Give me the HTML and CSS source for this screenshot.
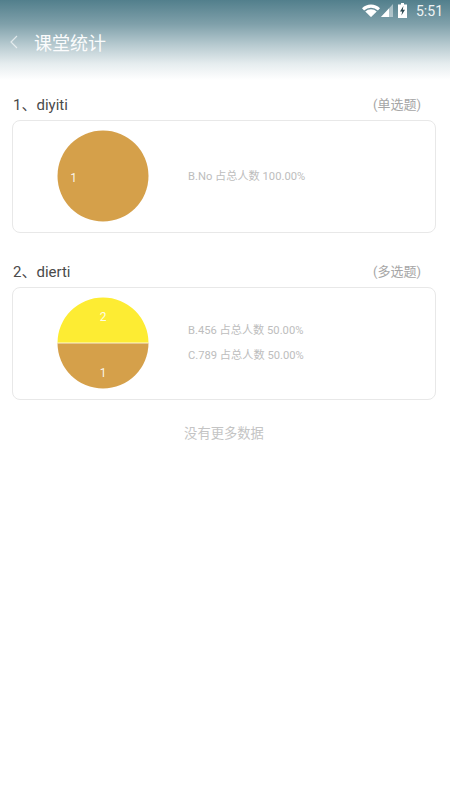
FILE: index.html
```html
<!DOCTYPE html>
<html lang="zh">
<head>
	<meta charset="UTF-8" />
	<meta name="viewport" content="width=device-width, initial-scale=1.0" />
	<title>课堂统计</title>
	<link rel="stylesheet" href="styles.css">
</head>
<body>
	<header class="header">
		<div class="status">
			<svg class="wifi" width="18" height="13" viewBox="0 0 19 13">
				<path d="M0 4 A14 14 0 0 1 19 4 L16.8 6.4 A11 11 0 0 0 2.2 6.4 Z" fill="#fff" />
				<path d="M3.4 7.6 A9 9 0 0 1 15.6 7.6 L9.5 13.5 Z" fill="#fff" />
			</svg>
			<svg class="signal" width="12" height="13" viewBox="0 0 12 13">
				<path d="M12 0 V13 H0 Z" fill="#fff" fill-opacity="0.45" />
				<path d="M8 4.5 V13 H0 Z" fill="#fff" />
			</svg>
			<svg class="battery" width="9" height="15" viewBox="0 0 9 15">
				<path d="M3 0 H6 V1.5 H9 V15 H0 V1.5 H3 Z" fill="#fff" />
				<path d="M5.4 3 L2 8.6 H4.2 L3.4 12.6 L7 6.8 H4.8 Z" fill="#2f4a52" />
			</svg>
			<span class="time">5:51</span>
		</div>
		<div class="title-bar">
			<svg class="back" width="9" height="14" viewBox="0 0 9 14">
				<path d="M8 1 L2 7 L8 13" fill="none" stroke="#fff" stroke-opacity="0.65" stroke-width="1.2" />
			</svg>
			<h1 class="title">课堂统计</h1>
		</div>
	</header>

	<main class="list">
		<section class="question">
			<div class="question-head">
				<span class="question-name">1、diyiti</span>
				<span class="question-type">(单选题)</span>
			</div>
			<div class="card">
				<div class="pie">
					<svg width="92" height="92" viewBox="0 0 92 92">
						<circle cx="46" cy="46" r="45.5" fill="#d5a04a" />
						<text class="pie-label" x="16.500" y="52">1</text>
					</svg>
				</div>
				<div class="stats">
					<p class="stat">B.No 占总人数 100.00%</p>
				</div>
			</div>
		</section>

		<section class="question">
			<div class="question-head">
				<span class="question-name">2、dierti</span>
				<span class="question-type">(多选题)</span>
			</div>
			<div class="card">
				<div class="pie">
					<svg width="92" height="92" viewBox="0 0 92 92">
						<path d="M0.500 46 A45.500 45.500 0 0 1 91.500 46 Z" fill="#fdec33" />
						<path d="M0.500 46 A45.500 45.500 0 0 0 91.500 46 Z" fill="#d5a04a" />
						<line x1="0.500" y1="46" x2="91.500" y2="46" stroke="#fff" stroke-opacity="0.8" stroke-width="1" />
						<text class="pie-label" x="46" y="24">2</text>
						<text class="pie-label" x="46" y="80">1</text>
					</svg>
				</div>
				<div class="stats">
					<p class="stat">B.456 占总人数 50.00%</p>
					<p class="stat">C.789 占总人数 50.00%</p>
				</div>
			</div>
		</section>

		<p class="no-more">没有更多数据</p>
	</main>
</body>
</html>
```

FILE: styles.css
```css
html {
	background: #fff;
}

body {
	margin: 0;
	font-family: Roboto, "Noto Sans CJK SC", sans-serif;
}

.header {
	height: 80px;
	padding: 0 7px 0 5px;
	box-sizing: border-box;
	background: linear-gradient(#527f8c 0, #7fa0aa 30%, #b4c8ce 55%, #e6edef 80%, #fff 100%);
	color: #fff;
}

.status {
	display: flex;
	align-items: center;
	justify-content: flex-end;
	height: 21px;
	gap: 3px;
}

.wifi {
	margin-right: -2px;
}

.battery {
	margin-left: 2px;
}

.time {
	margin-left: 6px;
	font-size: 14px;
	opacity: 0.9;
}

.title-bar {
	display: flex;
	align-items: center;
	height: 42px;
}

.back {
	margin-left: 4px;
}

.title {
	margin: 0 0 0 16px;
	font-size: 18px;
	font-weight: 400;
	opacity: 0.95;
}

.list {
	padding: 13.5px 14px 0 12px;
}

.question {
	margin-bottom: 28px;
}

.question-head {
	display: flex;
	align-items: center;
	justify-content: space-between;
	height: 26px;
	box-sizing: border-box;
	padding: 0 15px 6px 1px;
}

.question-name {
	font-size: 15px;
	color: #4a4a4a;
}

.question-type {
	font-size: 13px;
	color: #a6a6a6;
}

.card {
	display: flex;
	align-items: center;
	height: 113px;
	box-sizing: border-box;
	border: 1px solid #e8e8e8;
	border-radius: 8px;
}

.pie {
	display: flex;
	margin-left: 44px;
}

.pie-label {
	font-size: 12px;
	fill: #fff;
	fill-opacity: 0.9;
	text-anchor: middle;
}

.stats {
	display: flex;
	flex-direction: column;
	gap: 9px;
	margin-left: 39px;
}

.stat {
	margin: 0;
	font-size: 11.2px;
	line-height: 16px;
	color: #bdbdbd;
}

.stat:only-child {
	margin-top: 2px;
}

.no-more {
	margin: -5px 0 0;
	font-size: 13.300px;
	text-align: center;
	color: #c4c4c4;
}
```
